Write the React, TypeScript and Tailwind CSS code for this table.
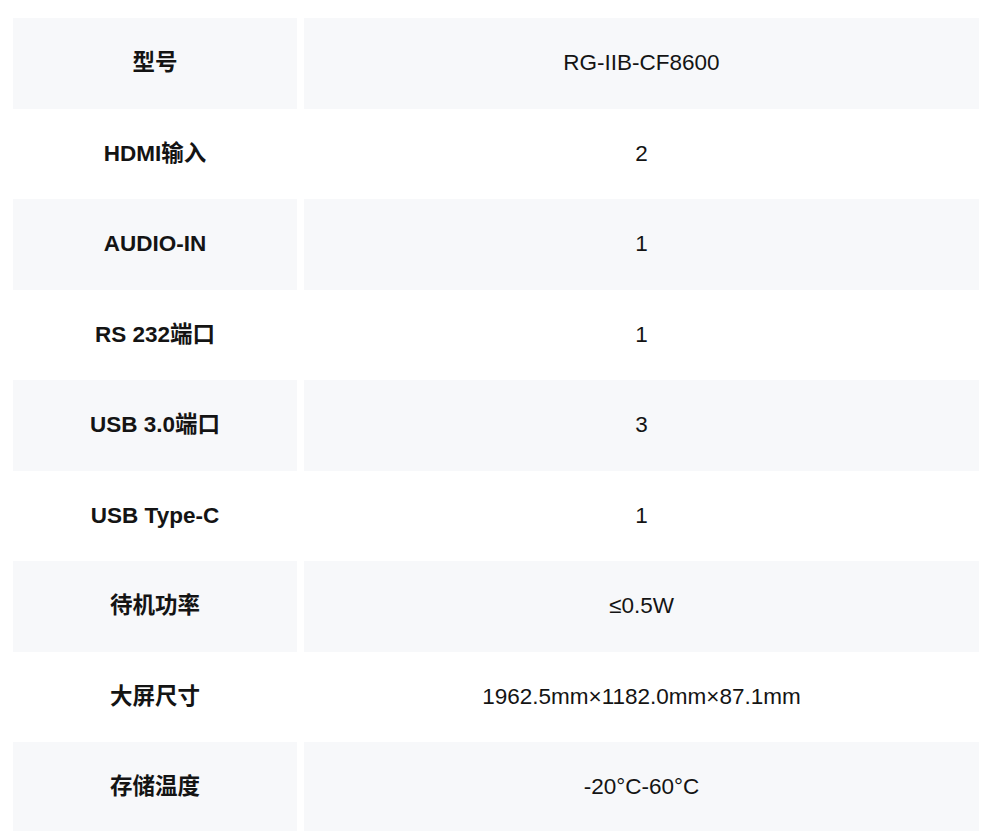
const rows: [string, string][] = [
  ["型号", "RG-IIB-CF8600"],
  ["HDMI输入", "2"],
  ["AUDIO-IN", "1"],
  ["RS 232端口", "1"],
  ["USB 3.0端口", "3"],
  ["USB Type-C", "1"],
  ["待机功率", "≤0.5W"],
  ["大屏尺寸", "1962.5mm×1182.0mm×87.1mm"],
  ["存储温度", "-20°C-60°C"],
];

export default function App() {
  return (
    <div
      className="min-h-screen bg-white pl-[13px] pr-[11px] pt-[18px] text-[#141414]"
      style={{ fontFamily: '"Liberation Sans", "Noto Sans CJK SC", sans-serif' }}
    >
      {rows.map(([label, value], i) => (
        <div key={label} className="grid h-[90.5px] grid-cols-[284px_1fr] gap-[7px]">
          <div
            className={`flex items-center justify-center text-[22.5px] font-bold ${
              i % 2 === 0 ? "bg-[#f7f8fa]" : "bg-white"
            }`}
          >
            {label}
          </div>
          <div
            className={`flex items-center justify-center text-[22.5px] ${
              i % 2 === 0 ? "bg-[#f7f8fa]" : "bg-white"
            }`}
          >
            {value}
          </div>
        </div>
      ))}
    </div>
  );
}
